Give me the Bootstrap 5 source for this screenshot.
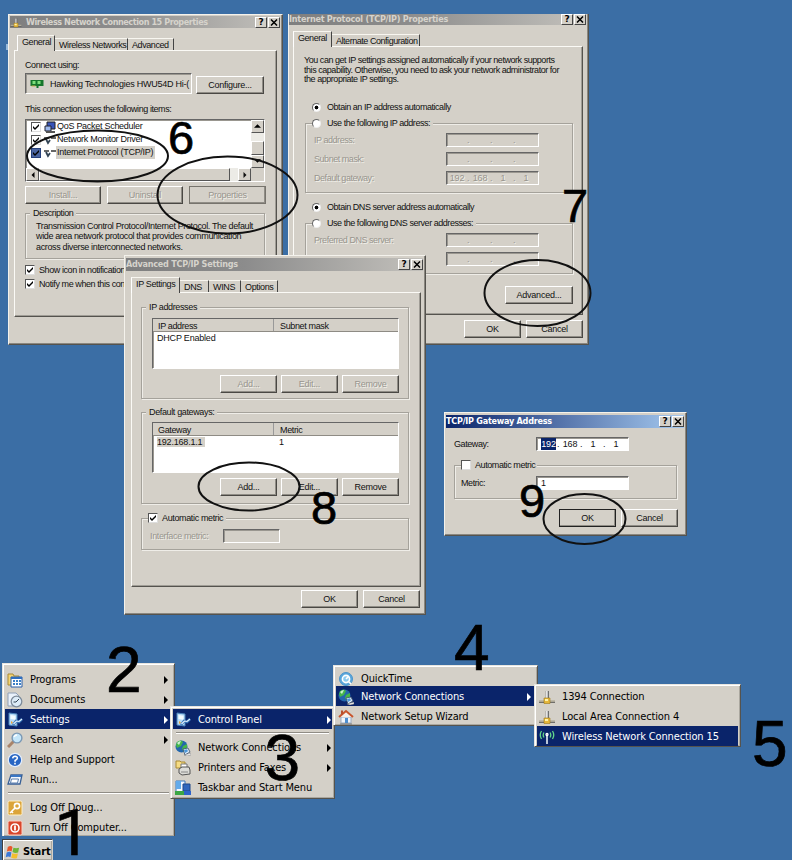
<!DOCTYPE html>
<html lang="en">
<head>
<meta charset="utf-8">
<title>Gateway setup steps</title>
<link href="https://cdn.jsdelivr.net/npm/bootstrap@5.3.0/dist/css/bootstrap.min.css" rel="stylesheet">
<style>
body{width:792px;height:860px;overflow:hidden;background:#3b6ea5;color:#111;font:9px/12px "Liberation Sans",Arial,sans-serif;letter-spacing:-.42px}
.desk{width:792px;height:860px;overflow:hidden}
.desk *{white-space:nowrap}
.win,.pop,.marks{position:absolute}
.win{background:#d4d0c8;border:1px solid;border-color:#f4f2ec #55534e #55534e #f4f2ec;box-shadow:inset -1px -1px #8a8780}
.w1{left:8px;top:14px;width:275px;height:331px;padding-top:1px}
.w2{left:288px;top:14px;width:301px;height:331px;border-top:0;letter-spacing:-.46px}
.w3{left:124px;top:255px;width:302px;height:360px;padding-top:2px;letter-spacing:-.36px}
.w4{left:444px;top:412px;width:243px;height:124px;padding-top:2px}
.tbar{height:13px;margin:0 2px 0 1px;background:linear-gradient(90deg,#7f7f7f,#8c8c8c 40%,#c3c1bc);color:#d6d3cc;font:bold 9px/13px "DejaVu Sans Condensed","DejaVu Sans",sans-serif;letter-spacing:-.25px}
.w4 .tbar{background:linear-gradient(90deg,#0a246a,#a6caf0);color:#fff}
.w1 .tbar{height:12px;line-height:12px;letter-spacing:-.43px}.w2 .tbar{height:11px;line-height:9px;margin-left:0}
.cap{width:12px;height:11px;background:#d4d0c8;border:1px solid;border-color:#fff #444 #444 #fff;color:#000;font:bold 9px/9px "DejaVu Sans",sans-serif;text-align:center;margin-left:1px;letter-spacing:0}
.cap svg{display:block;margin:1px auto}
.tabs{height:22px}.w2 .tabs,.w3 .tabs{height:21px}
.tb{height:12px;padding:0 0 0 4px;border-top:1px solid #f8f6f0;border-right:1px solid #444;line-height:12px}
.tb.on{height:16px;border-left:1px solid #fff;margin-bottom:-1px;padding:0 0 0 4px;background:#d4d0c8;z-index:1}
.t29{width:29px}.t32{width:32px}.t37{width:37px}.t38{width:38px}.t39{width:39px}.t46{width:46px}.t49{width:49px}.t73{width:73px}.t88{width:88px}
#ips{margin-left:6px}
.pg{border:1px solid;border-color:#fbfaf6 #55534e #55534e #fbfaf6;box-shadow:inset -1px -1px #a09d96;padding-left:10px}
.w1 .pg{height:267px;width:263px;margin-left:5px}
.w2 .pg{height:269px;width:290px;margin-left:4px}
.w3 .pg{height:295px;width:290px;margin-left:6px;padding-left:9px}
.b{height:18px;border:1px solid;border-color:#fff #4a4844 #4a4844 #fff;box-shadow:inset -1px -1px #908d86;text-align:center;line-height:17px;background:#d4d0c8;width:57px;letter-spacing:-.25px}
.off{color:#98958e;text-shadow:1px 1px #f2f0ea}
.grp{border:1px solid #a5a29b;box-shadow:1px 1px #efede8,inset 1px 1px #efede8}
.lg{width:fit-content;background:#d4d0c8;height:12px;margin-top:-7px}
.sunk{border:1px solid;border-color:#666 #fff #fff #666;box-shadow:inset 1px 1px #9a9790}
.fld{height:14px;width:93px;line-height:13px}
.fld i{font-style:normal;width:20px;text-align:center;letter-spacing:-.1px}.fld u{text-decoration:none;width:3px}
.ck{width:10px;height:10px;background:#fff;border:1px solid;border-color:#555 #ddd #ddd #555;flex:none}
.ck svg{display:block;width:8px;height:8px}
.rd{width:9px;height:9px;border-radius:50%;background:#fff;border:1px solid;border-color:#666 #eee #eee #666;flex:none}
.rd.on{background:radial-gradient(circle,#000 1.6px,#fff 2.2px)}
/* adapter dialog */
.a1{margin-top:8px}.a2{margin-top:2px;height:21px}.dev{width:167px;padding-left:4px;line-height:18px;letter-spacing:-.25px}.dev svg{flex:none;margin-right:6px}.a3{margin-top:9px}
.lst{margin-top:4px;height:63px;width:240px;background:#fff}
.li{height:13px;padding-left:5px;line-height:13px;letter-spacing:-.28px}.li>svg{margin:0 0 0 3px;flex:none}.li b{font-weight:400;padding:0 2px 0 1px}
.sb{background:#ecebe6}.arr{width:13px;height:13px;background:#d4d0c8;border:1px solid;border-color:#fff #555 #555 #fff}
.arr svg{display:block;margin:3px auto}
.a4{margin-top:4px;gap:6px}.a4 .b{width:76px}.a4 .foc{outline:1px solid #77746d;outline-offset:-1px;width:77px}
.a5{margin-top:9px;height:46px;width:240px}.a5 .lg{margin-left:4px;padding:0 3px}.a5 p{margin:2px 0 0 10px;line-height:10.4px;letter-spacing:-.36px}
.a6{margin-top:4px}.chk{height:14px;gap:4px}
/* tcp/ip dialog */
.para{margin:9px 0 0;height:29px;line-height:9.7px}
.c1{margin-top:15px;padding-left:8px}.rad{height:14px;gap:6px}
.g4{width:268px;height:70px;margin:9px 0 0 1px}.g5{height:51px;margin-top:9px}.g4 .lg{height:14px;margin:-8px 0 3px 6px;padding-right:3px}
.ln{height:14px;margin-bottom:5px;padding-left:8px;padding-right:33px;line-height:14px}
.c2{margin-top:7px;padding-left:8px}.adv{width:68px;margin:12px 0 0 201px}
.ft{gap:5px;padding-right:5px}
/* advanced dialog */
.g1{width:268px;height:92px;margin-top:14px;padding-left:10px}.g1 .lg{margin-left:-6px;padding:0 3px}
.g2{margin-top:13px}.tbl{margin-top:5px;height:51px;width:247px;background:#fff}.g2 .tbl{margin-top:4px}
.th1{height:13px;background:#d4d0c8;border-bottom:1px solid #8e8b84;line-height:14px;padding-left:5px}
.th1 span:first-child,.tr1 span:first-child{width:116px}.th1 span:first-child{border-right:1px solid #999}
.th1 span+span,.tr1 span+span{padding-left:6px}.tr1{padding-left:4px;line-height:12px;letter-spacing:-.2px}
.sel{background:#d4d0c8;padding-right:3px}
.bs{margin-top:6px;gap:4px;width:247px}.g2 .bs{margin-top:5px}
.g3{width:268px;height:32px;margin-top:14px}.g3 .lg{margin-left:6px;gap:4px;padding-right:3px}
.g3 .ln{margin:5px 0 0;padding-left:8px}.g3 .ln span{width:73px}.g3 .fld{width:57px}
.f3{margin-top:3px}.f2{margin-top:5px}
/* gateway dialog */
.r1{margin:9px 0 0 9px;line-height:15px}.r1 span{width:82px}
.g6{width:223px;height:34px;margin:13px 0 0 9px}.g6 .lg{margin-left:6px;gap:4px;padding-right:2px}.g6 .ln{margin:5px 0 0;padding-left:6px}.g6 .ln span{width:75px}
.f4{margin-top:10px;padding-right:8px}.def{outline:1px solid #222;outline-offset:-1px}
#cfg{width:68px}#ipck{background:#4a64a0;border-color:#26407c}
#thumb{width:191px}#vs{width:13px}#vt{height:14px}#corner{height:13px;background:#d4d0c8}
#oct{background:#0a246a;color:#fff;width:15px;margin:0 1px 0 4px}
/* menus */
.pop{background:#d4d0c8;border:1px solid;border-color:#e8e6e0 #55534e #55534e #e8e6e0;box-shadow:inset 1px 1px #fff,inset -1px -1px #aaa79f;padding:2px;font:11px/18px "DejaVu Sans Condensed","DejaVu Sans",sans-serif;letter-spacing:-.13px;color:#000}
.m1{left:2px;top:663px;width:173px;height:173px;padding-top:5px;border-bottom:0}
.m2{left:170px;top:706px;width:165px;height:93px}
.m3{left:333px;top:665px;width:205px;height:61px;padding-top:3px}
.m4{left:534px;top:684px;width:207px;height:63px;padding:1px 2px}
.mi{height:20px;padding:2px 0 0 2px;flex:none}.mi.hi{background:#0a246a;color:#fff}
.mi>svg:first-child{margin-right:7px;flex:none}.mi .ar{margin-left:auto;margin-right:4px}
.m2 .ar{margin-right:1px}
.sep{height:2px;margin:3px;border-top:1px solid #8f8c85;border-bottom:1px solid #fff}
.start{left:2px;top:839px;width:51px;height:22px;padding:4px 0 0 2px;border-color:#404040 #d4d0c8 #fff #404040;font-weight:700}
.start svg{margin-right:3px}
#qt{height:17px}
.marks{left:0;top:0;pointer-events:none}
.marks text{font-family:"Liberation Sans",Arial,sans-serif;letter-spacing:0;stroke:#000;stroke-width:.7px}
.marks .one{font-family:Roboto,Inter,sans-serif}
</style>
<script src="https://cdn.jsdelivr.net/npm/bootstrap@5.3.0/dist/js/bootstrap.bundle.min.js"></script>
</head>
<body>
<svg width="0" height="0" class="position-absolute">
<symbol id="tick" viewBox="0 0 8 8"><path d="M1 3v2l2 2 4-4V1L3 5z" fill="#000"/></symbol>
<symbol id="ex" viewBox="0 0 8 7"><path d="M1 0.500l6 6M7 .5L1 6.500" stroke="#000" stroke-width="1.500"/></symbol>
<symbol id="right" viewBox="0 0 4 8"><path d="M0 0l4 4-4 4z" fill="currentColor"/></symbol>
<symbol id="lan" viewBox="0 0 16 16"><path d="M0 12.500h16" stroke="#444" stroke-width="2.400"/><path d="M0 12h16" stroke="#f2ead0" stroke-width="1.200"/><path d="M8.300 2v8" stroke="#555" stroke-width="3"/><path d="M7.900 2v8" stroke="#f4f4f4" stroke-width="1.600"/><path d="M5 9h6v5.500H5z" fill="#e5b73b" stroke="#a07818" stroke-width=".6"/><path d="M6 10h3v2H6z" fill="#fff3a8"/></symbol>
<symbol id="globe" viewBox="0 0 16 16"><circle cx="6.500" cy="6.500" r="6" fill="#2367ad"/><path d="M2 2q4-3 6 0l-2 4-4 2-1-3zM8 6l4-2v4l-3 4-2-3z" fill="#45b649"/><path d="M2 3q2-2 4-2L4 5z" fill="#c9f2d2"/><path d="M8 9l5-1 2 4-5 3z" fill="#dce8f5" stroke="#37506e" stroke-width=".8"/><path d="M9 10l3-.7 1 2-3 1.600z" fill="#4d98d9"/><path d="M9 15l7-2v2l-4 1z" fill="#eee" stroke="#666" stroke-width=".4"/></symbol>
<symbol id="panel" viewBox="0 0 16 16"><path d="M2 1l8 1v12l-8-1z" fill="#b7dcf7" stroke="#4b83bb"/><path d="M3.500 3l5 .7v4l-5-.6z" fill="#f3fbff"/><path d="M6 13l3-4 3 1 3-3" stroke="#3977b8" stroke-width="2.600" fill="none"/><path d="M6.500 12l3-3 2.500.5 3-2.500" stroke="#e5f3ff" stroke-width="1.100" fill="none"/><path d="M4 9l2 1.500-2 1.500z" fill="#e9a33b"/></symbol>
</svg>
<main class="desk position-relative">

<section class="win w1">
 <div class="tbar d-flex align-items-center"><svg width="12" height="11" class="me-1"><use href="#lan"/></svg><span class="me-auto">Wireless Network Connection 15 Properties</span><span class="cap">?</span><span class="cap"><svg width="8" height="7"><use href="#ex"/></svg></span></div>
 <div class="tabs d-flex align-items-end"><span class="tb on t38 ms-2">General</span><span class="tb t73">Wireless Networks</span><span class="tb t46">Advanced</span></div>
 <div class="pg">
  <div class="a1">Connect using:</div>
  <div class="a2 d-flex"><div class="dev sunk d-flex align-items-center"><svg width="14" height="10" viewBox="0 0 13 10"><path d="M0 1h13v6H8v2H6V7H0z" fill="#16762c"/><path d="M2 2h3v3H2zM7 2h3v3H7z" fill="#7de07b"/><path d="M1 7h4" stroke="#c8b04a"/></svg>Hawking Technologies HWU54D Hi-(</div><div class="b ms-1 align-self-end" id="cfg">Configure...</div></div>
  <div class="a3">This connection uses the following items:</div>
  <div class="lst sunk d-flex">
   <div class="flex-fill d-flex flex-column">
    <div class="flex-fill">
     <div class="li d-flex align-items-center"><span class="ck"><svg><use href="#tick"/></svg></span><svg width="12" height="12" viewBox="0 0 12 12"><path d="M3 1h8v7H3z" fill="#3854b8" stroke="#222"/><path d="M1 5h6v5H1z" fill="#9db9ed" stroke="#223"/><path d="M2 11h9" stroke="#555" stroke-width="2"/></svg><b>QoS Packet Scheduler</b></div>
     <div class="li d-flex align-items-center"><span class="ck"><svg><use href="#tick"/></svg></span><svg width="12" height="10" viewBox="0 0 12 10"><path d="M0 3h5M7 3h5" stroke="#666" stroke-width="1.800"/><path d="M2 4l2 4 2-3" fill="none" stroke="#345" stroke-width="1.800"/></svg><b>Network Monitor Driver</b></div>
     <div class="li d-flex align-items-center"><span class="ck" id="ipck"><svg><use href="#tick"/></svg></span><svg width="12" height="10" viewBox="0 0 12 10"><path d="M0 3h5M7 3h5" stroke="#666" stroke-width="1.800"/><path d="M2 4l2 4 2-3" fill="none" stroke="#345" stroke-width="1.800"/></svg><b class="sel">Internet Protocol (TCP/IP)</b></div>
    </div>
    <div class="sb d-flex"><span class="arr"><svg width="4" height="6" viewBox="0 0 4 8"><path d="M4 0L0 4l4 4z"/></svg></span><span class="arr" id="thumb"></span><span class="arr ms-auto"><svg width="4" height="6"><use href="#right"/></svg></span></div>
   </div>
   <div class="sb d-flex flex-column" id="vs"><span class="arr"><svg width="7" height="4" viewBox="0 0 8 4"><path d="M0 4l4-4 4 4z"/></svg></span><span class="arr mt-auto" id="vt"></span><span class="arr"><svg width="7" height="4" viewBox="0 0 8 4"><path d="M0 0l4 4 4-4z"/></svg></span><span id="corner"></span></div>
  </div>
  <div class="a4 d-flex"><div class="b off">Install...</div><div class="b off">Uninstall</div><div class="b off foc">Properties</div></div>
  <div class="grp a5"><div class="lg">Description</div><p>Transmission Control Protocol/Internet Protocol. The default<br>wide area network protocol that provides communication<br>across diverse interconnected networks.</p></div>
  <div class="a6"><div class="chk d-flex align-items-center"><span class="ck"><svg><use href="#tick"/></svg></span>Show icon in notification</div><div class="chk d-flex align-items-center"><span class="ck"><svg><use href="#tick"/></svg></span>Notify me when this con</div></div>
 </div>
</section>

<section class="win w2">
 <div class="tbar d-flex align-items-center"><span class="me-auto">Internet Protocol (TCP/IP) Properties</span><span class="cap">?</span><span class="cap"><svg width="8" height="7"><use href="#ex"/></svg></span></div>
 <div class="tabs d-flex align-items-end ps-1"><span class="tb on t39">General</span><span class="tb t88">Alternate Configuration</span></div>
 <div class="pg">
  <p class="para">You can get IP settings assigned automatically if your network supports<br>this capability. Otherwise, you need to ask your network administrator for<br>the appropriate IP settings.</p>
  <div class="rad c1 d-flex align-items-center"><span class="rd on"></span>Obtain an IP address automatically</div>
  <div class="grp g4"><div class="lg rad d-flex align-items-center"><span class="rd"></span>Use the following IP address:</div>
   <div class="ln d-flex justify-content-between off">IP address:<div class="fld sunk d-flex"><i></i><u>.</u><i></i><u>.</u><i></i><u>.</u><i></i></div></div>
   <div class="ln d-flex justify-content-between off">Subnet mask:<div class="fld sunk d-flex"><i></i><u>.</u><i></i><u>.</u><i></i><u>.</u><i></i></div></div>
   <div class="ln d-flex justify-content-between off">Default gateway:<div class="fld sunk d-flex"><i>192</i><u>.</u><i>168</i><u>.</u><i>1</i><u>.</u><i>1</i></div></div>
  </div>
  <div class="rad c2 d-flex align-items-center"><span class="rd on"></span>Obtain DNS server address automatically</div>
  <div class="grp g4 g5"><div class="lg rad d-flex align-items-center"><span class="rd"></span>Use the following DNS server addresses:</div>
   <div class="ln d-flex justify-content-between off">Preferred DNS server:<div class="fld sunk d-flex"><i></i><u>.</u><i></i><u>.</u><i></i><u>.</u><i></i></div></div>
   <div class="ln d-flex justify-content-end off"><div class="fld sunk d-flex"><i></i><u>.</u><i></i><u>.</u><i></i><u>.</u><i></i></div></div>
  </div>
  <div class="b adv">Advanced...</div>
 </div>
 <div class="ft f2 d-flex justify-content-end"><div class="b">OK</div><div class="b">Cancel</div></div>
</section>

<section class="win w3">
 <div class="tbar d-flex align-items-center"><span class="me-auto">Advanced TCP/IP Settings</span><span class="cap">?</span><span class="cap"><svg width="8" height="7"><use href="#ex"/></svg></span></div>
 <div class="tabs d-flex align-items-end"><span class="tb on t49" id="ips">IP Settings</span><span class="tb t29">DNS</span><span class="tb t32">WINS</span><span class="tb t37">Options</span></div>
 <div class="pg">
  <div class="grp g1"><div class="lg">IP addresses</div>
   <div class="tbl sunk"><div class="th1 d-flex"><span>IP address</span><span>Subnet mask</span></div><div class="tr1 d-flex"><span>DHCP Enabled</span></div></div>
   <div class="bs d-flex justify-content-end"><div class="b off">Add...</div><div class="b off">Edit...</div><div class="b off">Remove</div></div>
  </div>
  <div class="grp g1 g2"><div class="lg">Default gateways:</div>
   <div class="tbl sunk"><div class="th1 d-flex"><span>Gateway</span><span>Metric</span></div><div class="tr1 d-flex"><span><b class="sel fw-normal">192.168.1.1</b></span><span>1</span></div></div>
   <div class="bs d-flex justify-content-end"><div class="b">Add...</div><div class="b">Edit...</div><div class="b">Remove</div></div>
  </div>
  <div class="grp g3"><div class="lg d-flex align-items-center"><span class="ck"><svg><use href="#tick"/></svg></span>Automatic metric</div>
   <div class="ln d-flex off"><span>Interface metric:</span><div class="fld sunk"></div></div></div>
 </div>
 <div class="ft f3 d-flex justify-content-end"><div class="b">OK</div><div class="b">Cancel</div></div>
</section>

<section class="win w4">
 <div class="tbar d-flex align-items-center"><span class="me-auto">TCP/IP Gateway Address</span><span class="cap">?</span><span class="cap"><svg width="8" height="7"><use href="#ex"/></svg></span></div>
 <div class="r1 d-flex"><span>Gateway:</span><div class="fld sunk d-flex bg-white"><i id="oct">192</i><u>.</u><i>168</i><u>.</u><i>1</i><u>.</u><i>1</i></div></div>
 <div class="grp g6"><div class="lg d-flex align-items-center"><span class="ck"></span>Automatic metric</div>
  <div class="ln d-flex"><span>Metric:</span><div class="fld sunk bg-white ps-1">1</div></div></div>
 <div class="ft f4 d-flex justify-content-end"><div class="b def">OK</div><div class="b">Cancel</div></div>
</section>

<nav class="pop m1">
 <div class="mi d-flex align-items-center"><svg width="16" height="16"><path d="M1 2h5l1 2h5v9H1z" fill="#f4d572" stroke="#a98a35"/><path d="M4 5h11v10H4z" fill="#fff" stroke="#2a5fa8"/><path d="M4 5h11v2H4z" fill="#2f6fc0"/><path d="M6 9h2M9 9h2M12 9h2M6 12h2M9 12h2M12 12h2" stroke="#3b80c8" stroke-width="2"/></svg>Programs<svg class="ar" width="4" height="8"><use href="#right"/></svg></div>
 <div class="mi d-flex align-items-center"><svg width="16" height="16"><path d="M1 1h8l3 3v10H1z" fill="#e9f1fb" stroke="#8fa0b8"/><circle cx="9.500" cy="9.500" r="5.300" fill="#dcebf8" stroke="#7d8b9a" stroke-width="1.300"/><path d="M12 7l-3 3H6.500" stroke="#345" fill="none"/></svg>Documents<svg class="ar" width="4" height="8"><use href="#right"/></svg></div>
 <div class="mi hi d-flex align-items-center"><svg width="16" height="16"><use href="#panel"/></svg>Settings<svg class="ar" width="4" height="8"><use href="#right"/></svg></div>
 <div class="mi d-flex align-items-center"><svg width="16" height="16"><path d="M1 15l6-6" stroke="#a9846a" stroke-width="3"/><circle cx="10" cy="6" r="4.900" fill="#c4e6fa" stroke="#7b98b4" stroke-width="1.400"/><path d="M7 5q1-2 3-2" stroke="#fff" stroke-width="1.500" fill="none"/></svg>Search<svg class="ar" width="4" height="8"><use href="#right"/></svg></div>
 <div class="mi d-flex align-items-center"><svg width="16" height="16"><circle cx="8" cy="8" r="6.700" fill="#2866c4" stroke="#e5eefb" stroke-width="1.200"/><path d="M5.700 6.400q.2-2.200 2.400-2.200 2.300.1 2.200 2-.1 1.300-2.200 2.300v1.300M8 10.800v1.800" stroke="#fff" stroke-width="1.600" fill="none"/></svg>Help and Support</div>
 <div class="mi d-flex align-items-center"><svg width="16" height="16"><path d="M4 3h11l-2 9H1z" fill="#f4f8fd" stroke="#375f96" stroke-width="1.300"/><path d="M4 4h10" stroke="#3a77c5" stroke-width="2"/><path d="M4.500 7h7l-1 4h-7z" fill="#fff" stroke="#5a7fae"/></svg>Run...</div>
 <div class="sep"></div>
 <div class="mi d-flex align-items-center"><svg width="16" height="16"><rect x="1" y="1" width="14" height="14" rx="1.500" fill="#dba43a" stroke="#fff0c6"/><circle cx="10" cy="6" r="2.600" fill="none" stroke="#fff" stroke-width="1.600"/><path d="M8 8l-5 5M4 11l2 2" stroke="#fff" stroke-width="1.600"/></svg>Log Off Doug...</div>
 <div class="mi d-flex align-items-center"><svg width="16" height="16"><rect x="1" y="1" width="14" height="14" rx="1.500" fill="#d8472c" stroke="#ffd2c4"/><circle cx="8" cy="8" r="4" fill="none" stroke="#fff" stroke-width="1.600"/><path d="M8 5.500v5" stroke="#fff" stroke-width="1.800"/></svg><span class="off-pc">Turn Off Computer...</span></div>
</nav>
<div class="pop start d-flex align-items-center"><svg width="15" height="15" viewBox="0 0 16 16"><path d="M3 2q3-2 5 0L7 7Q5 5.500 2 7z" fill="#e8562a"/><path d="M9 3q3 1 6 0l-1 5q-3 1-6-.5z" fill="#6fb536"/><path d="M1.800 8q3-1.500 5 0l-1 5q-2-1.500-5 0z" fill="#3a78d8"/><path d="M7.800 8.800q3 1.200 6 .2l-1.200 5q-3 1-6-.4z" fill="#f3bf2d"/></svg>Start</div>

<nav class="pop m2">
 <div class="mi hi d-flex align-items-center"><svg width="16" height="16"><use href="#panel"/></svg>Control Panel<svg class="ar" width="4" height="8"><use href="#right"/></svg></div>
 <div class="sep"></div>
 <div class="mi d-flex align-items-center"><svg width="16" height="16"><use href="#globe"/></svg>Network Connections<svg class="ar" width="4" height="8"><use href="#right"/></svg></div>
 <div class="mi d-flex align-items-center"><svg width="16" height="16"><path d="M1 1h4l1 1h4v6H1z" fill="#f6dc83" stroke="#a98a35"/><path d="M6 4h6v5H6z" fill="#fff" stroke="#777"/><path d="M4 9l3-2h7l1 3v4l-8 1-3-2z" fill="#dcdcd8" stroke="#555"/><path d="M6 12h7" stroke="#888"/></svg>Printers and Faxes<svg class="ar" width="4" height="8"><use href="#right"/></svg></div>
 <div class="mi d-flex align-items-center"><svg width="16" height="16"><path d="M1 1h9v12H1z" fill="#f4f8ff" stroke="#3b78bd"/><path d="M1 1h5v8H1z" fill="#62abeb"/><path d="M8 4h7v7H8z" fill="#2f66bd" stroke="#1f4688"/><path d="M0 11h9v4H0z" fill="#3ba644"/><path d="M9 11h7v4H9z" fill="#2c62ca"/></svg>Taskbar and Start Menu</div>
</nav>

<nav class="pop m3">
 <div class="mi d-flex align-items-center" id="qt"><svg width="16" height="16"><circle cx="8" cy="8" r="6.500" fill="#5aa7dc" stroke="#4a94cc"/><circle cx="8" cy="8" r="3.600" fill="#8ccbf0" stroke="#fff" stroke-width="1.600"/><path d="M8 8l3-3M10 10l3 3" stroke="#fff" stroke-width="1.600"/></svg>QuickTime</div>
 <div class="mi hi d-flex align-items-center"><svg width="16" height="16"><use href="#globe"/></svg>Network Connections<svg class="ar" width="4" height="8"><use href="#right"/></svg></div>
 <div class="mi d-flex align-items-center"><svg width="16" height="16"><path d="M3 8h10v6H3z" fill="#f2f5fa" stroke="#9aabc2"/><path d="M1 8l7-6 7 6" fill="#f4f0ea" stroke="#c8552c" stroke-width="2"/><path d="M3 1.500h2v4H3z" fill="#b55030"/><path d="M7 9h3v5H7z" fill="#4d8ed0"/><path d="M2 15h12" stroke="#777"/></svg>Network Setup Wizard</div>
</nav>

<nav class="pop m4">
 <div class="mi d-flex align-items-center"><svg width="16" height="16"><use href="#lan"/></svg>1394 Connection</div>
 <div class="mi d-flex align-items-center"><svg width="16" height="16"><use href="#lan"/></svg>Local Area Connection 4</div>
 <div class="mi hi d-flex align-items-center"><svg width="16" height="16" fill="none" stroke="#62d68a" stroke-width="1.300"><path d="M2.500 2q-2.500 4 0 8M5 3.500q-1.600 2.500 0 5M13.500 2q2.500 4 0 8M11 3.500q1.600 2.500 0 5"/><path d="M8 6v9" stroke="#b9c6d8" stroke-width="2"/><circle cx="8" cy="5.500" r="1" stroke="#fff"/></svg>Wireless Network Connection 15</div>
</nav>

<svg class="marks" width="792" height="860">
 <path d="M7 44v6" stroke="#b8d4ee" stroke-width="1.500"/>
 <g fill="none" stroke="#111" stroke-width="2">
 <ellipse cx="97.500" cy="156" rx="70.500" ry="25.500"/><ellipse cx="227.500" cy="195" rx="70" ry="38.500"/>
 <ellipse cx="537.500" cy="293" rx="53" ry="33"/><ellipse cx="249" cy="486.500" rx="50.500" ry="24"/><ellipse cx="584.500" cy="519" rx="41" ry="25"/></g>
 <g font-size="64"><text class="one" x="54.500" y="855">1</text><text x="106" y="692">2</text><text x="264.500" y="780">3</text><text x="454" y="670">4</text><text x="752" y="766">5</text></g>
 <g font-size="47"><text x="168" y="153.500">6</text><text x="562" y="221.500">7</text><text x="311" y="523.500">8</text><text x="519" y="517">9</text></g>
</svg>
</main>
</body>
</html>
